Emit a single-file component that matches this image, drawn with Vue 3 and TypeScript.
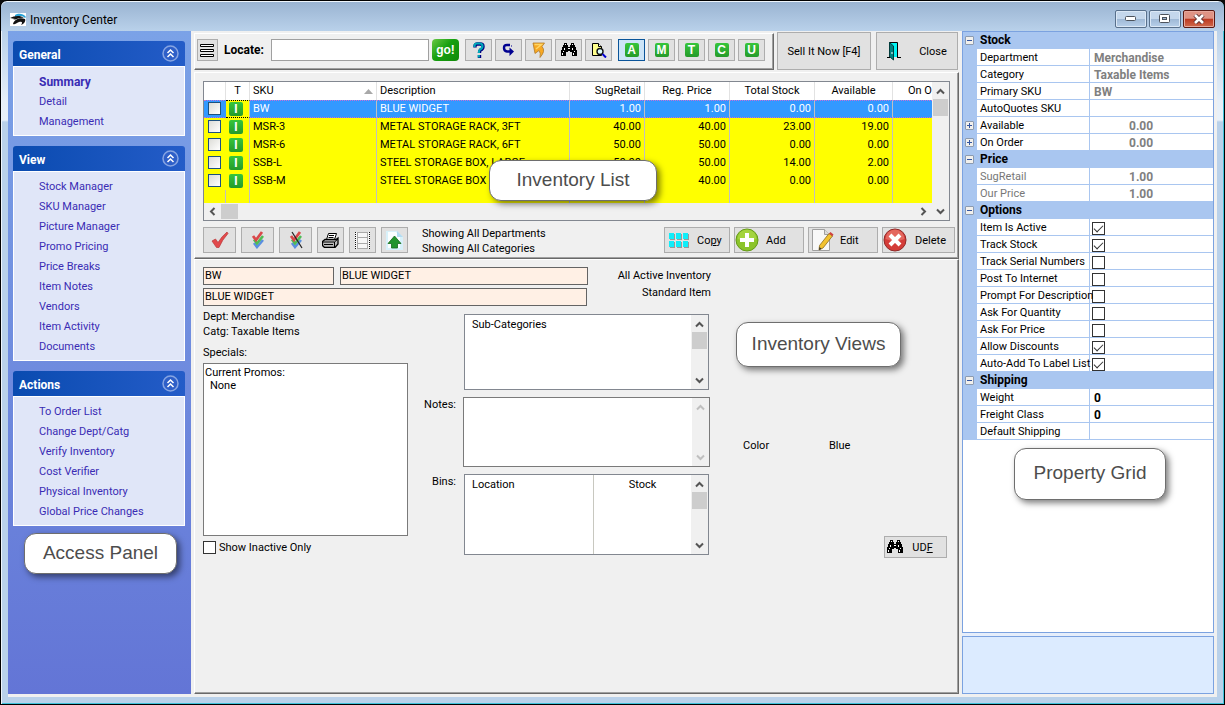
<script setup lang="ts">
import { ref } from 'vue'

interface NavGroup {
  title: string
  items: string[]
}
interface StockRow {
  sku: string
  description: string
  sugRetail: string
  regPrice: string
  totalStock: string
  available: string
}
interface Property {
  name: string
  value?: string
  checked?: boolean
  kind?: 'number' | 'option' | 'editable'
  expandable?: boolean
  muted?: boolean
}
interface PropertyGroup {
  title: string
  rows: Property[]
}

const navGroups: NavGroup[] = [
  { title: 'General', items: ['Summary', 'Detail', 'Management'] },
  {
    title: 'View',
    items: [
      'Stock Manager',
      'SKU Manager',
      'Picture Manager',
      'Promo Pricing',
      'Price Breaks',
      'Item Notes',
      'Vendors',
      'Item Activity',
      'Documents',
    ],
  },
  {
    title: 'Actions',
    items: [
      'To Order List',
      'Change Dept/Catg',
      'Verify Inventory',
      'Cost Verifier',
      'Physical Inventory',
      'Global Price Changes',
    ],
  },
]
const activeItem = ref('Summary')

const typeFilters = ['A', 'M', 'T', 'C', 'U']
const activeFilter = ref('A')

const rows: StockRow[] = [
  { sku: 'BW', description: 'BLUE WIDGET', sugRetail: '1.00', regPrice: '1.00', totalStock: '0.00', available: '0.00' },
  { sku: 'MSR-3', description: 'METAL STORAGE RACK, 3FT', sugRetail: '40.00', regPrice: '40.00', totalStock: '23.00', available: '19.00' },
  { sku: 'MSR-6', description: 'METAL STORAGE RACK, 6FT', sugRetail: '50.00', regPrice: '50.00', totalStock: '0.00', available: '0.00' },
  { sku: 'SSB-L', description: 'STEEL STORAGE BOX, LARGE', sugRetail: '50.00', regPrice: '50.00', totalStock: '14.00', available: '2.00' },
  { sku: 'SSB-M', description: 'STEEL STORAGE BOX', sugRetail: '', regPrice: '40.00', totalStock: '0.00', available: '0.00' },
]
const selectedSku = ref('BW')

const propertyGroups: PropertyGroup[] = [
  {
    title: 'Stock',
    rows: [
      { name: 'Department', value: 'Merchandise' },
      { name: 'Category', value: 'Taxable Items' },
      { name: 'Primary SKU', value: 'BW' },
      { name: 'AutoQuotes SKU' },
      { name: 'Available', value: '0.00', kind: 'number', expandable: true },
      { name: 'On Order', value: '0.00', kind: 'number', expandable: true },
    ],
  },
  {
    title: 'Price',
    rows: [
      { name: 'SugRetail', value: '1.00', kind: 'number', muted: true },
      { name: 'Our Price', value: '1.00', kind: 'number', muted: true },
    ],
  },
  {
    title: 'Options',
    rows: [
      { name: 'Item Is Active', kind: 'option', checked: true },
      { name: 'Track Stock', kind: 'option', checked: true },
      { name: 'Track Serial Numbers', kind: 'option', checked: false },
      { name: 'Post To Internet', kind: 'option', checked: false },
      { name: 'Prompt For Description', kind: 'option', checked: false },
      { name: 'Ask For Quantity', kind: 'option', checked: false },
      { name: 'Ask For Price', kind: 'option', checked: false },
      { name: 'Allow Discounts', kind: 'option', checked: true },
      { name: 'Auto-Add To Label List', kind: 'option', checked: true },
    ],
  },
  {
    title: 'Shipping',
    rows: [
      { name: 'Weight', value: '0', kind: 'editable' },
      { name: 'Freight Class', value: '0', kind: 'editable' },
      { name: 'Default Shipping' },
    ],
  },
]
</script>

<template>
  <div class="window">
    <svg class="symbols" aria-hidden="true">
      <symbol id="chev-up" viewBox="0 0 9 9"><path d="M1 6.5 4.500 3 8 6.500" fill="none" stroke="currentColor" stroke-width="2" /></symbol>
      <symbol id="chev-down" viewBox="0 0 9 9"><path d="M1 2.500 4.500 6 8 2.500" fill="none" stroke="currentColor" stroke-width="2" /></symbol>
      <symbol id="chev-left" viewBox="0 0 9 9"><path d="M6.500 1 3 4.500 6.500 8" fill="none" stroke="currentColor" stroke-width="2" /></symbol>
      <symbol id="chev-right" viewBox="0 0 9 9"><path d="M2.500 1 6 4.500 2.500 8" fill="none" stroke="currentColor" stroke-width="2" /></symbol>
      <symbol id="binoculars" viewBox="0 0 16 14">
        <path d="M3 0h3v2h1v2h2V2h1V0h3v2h1v2h1v3h1v6h-5V9H9V8H7v1H5v4H0V7h1V4h1V2h1z" fill="#000" />
        <path d="M4 1h1v1H4zM11 1h1v1h-1zM3 5h1v2H3zM2 8h1v1H2zM1 10h1v2H1zM12 5h-1v2h1zM13 8h1v1h-1zM12 10h1v2h-1zM7 5h2v1H7z" fill="#fff" />
      </symbol>
    </svg>

    <header class="title-bar">
      <svg class="app-icon" viewBox="0 0 16 13" aria-hidden="true">
        <rect width="16" height="13" fill="#fff" />
        <path d="M5 2C8 0 13 0 16 4L15 5C12 2 9 3 5 4Z" fill="#2aa3d6" />
        <path d="M0 5C4 3 10 2 14 5C9 4 7 7 3 7L5 6Z" fill="#111" />
        <path d="M3 11C4 7 9 4 15 6C16 8 14 11 11 12C13 9 12 8 9 9C6 10 5 12 3 11Z" fill="#111" />
      </svg>
      <h1>Inventory Center</h1>
      <div class="window-buttons">
        <button type="button" class="win-btn" aria-label="Minimize">
          <svg width="12" height="6" viewBox="0 0 12 6"><rect x=".5" y=".5" width="10" height="4" rx="1" fill="#fff" stroke="#4d535c" /></svg>
        </button>
        <button type="button" class="win-btn" aria-label="Restore">
          <svg width="12" height="10" viewBox="0 0 12 10"><rect x=".5" y=".5" width="10" height="8" rx="1" fill="#fff" stroke="#4d535c" /><rect x="3.500" y="3.500" width="4" height="2" fill="#9db6d2" stroke="#4d535c" /></svg>
        </button>
        <button type="button" class="win-btn close" aria-label="Close window">
          <svg width="12" height="10" viewBox="0 0 12 10"><path d="M2 1 10 9M10 1 2 9" stroke="#5a3030" stroke-width="4.400" /><path d="M2 1 10 9M10 1 2 9" stroke="#fff" stroke-width="2.600" /></svg>
        </button>
      </div>
    </header>

    <div class="body">
      <nav class="sidebar" aria-label="Access panel">
        <section v-for="group in navGroups" :key="group.title" class="nav-group">
          <header>
            <h2>{{ group.title }}</h2>
            <button type="button" class="collapse" :aria-label="'Collapse ' + group.title">
              <svg viewBox="0 0 17 17"><circle cx="8.500" cy="8.500" r="7.500" fill="#2e5fc8" stroke="#86a4e2" stroke-width="1.500" /><path d="M5.500 8 8.500 5 11.500 8M5.500 12 8.500 9 11.500 12" fill="none" stroke="#fff" stroke-width="1.500" /></svg>
            </button>
          </header>
          <ul>
            <li v-for="item in group.items" :key="item">
              <a href="#" :class="{ active: item === activeItem }" @click.prevent="activeItem = item">{{ item }}</a>
            </li>
          </ul>
        </section>
        <div class="callout access">Access Panel</div>
      </nav>

      <main class="main">
        <div class="top-row">
          <div class="panel toolbar">
            <button type="button" class="btn menu-btn" aria-label="Menu">
              <svg width="15" height="15" viewBox="0 0 15 15"><path d="M.5 1.500h13v2H.5zM.5 6.500h13v2H.5zM.5 11.500h13v2H.5z" fill="#fff" stroke="#000" /></svg>
            </button>
            <label class="locate" for="locate">Locate:</label>
            <input id="locate" class="locate-input" type="text" />
            <button type="button" class="go">go!</button>
            <div class="tools">
              <button type="button" class="btn tool" aria-label="Help">
                <svg width="14" height="17" viewBox="0 0 14 17"><path d="M3 5.500V4Q3 2 5.500 2H8Q11 2 11 4.500T8.500 8Q7.500 8.700 7.500 11M7.500 13v3" fill="none" stroke="#000080" stroke-width="3.400" /><path d="M2.500 5V4Q2.500 1.500 5 1.500H7.500Q10.500 1.500 10.500 4T8 7.500Q6.800 8.500 6.800 11M6.800 13v2.500" fill="none" stroke="#00a8b8" stroke-width="2.200" /></svg>
              </button>
              <button type="button" class="btn tool" aria-label="Undo">
                <svg width="14" height="14" viewBox="0 0 14 14"><path d="M8 2H5Q2 2 2 5T5 8.500H9" fill="none" stroke="#000090" stroke-width="2.400" /><path d="M7.500 4.500 12 8.500 7.500 13Z" fill="#000090" /><path d="M9 3h1" stroke="#000090" /></svg>
              </button>
              <button type="button" class="btn tool" aria-label="Jump">
                <svg width="14" height="16" viewBox="0 0 14 16"><path d="M1 1H12.500L10 4.500Q14 9 8 15.500Q9 11 7 8.500L3 11.500Z" fill="#f7a823" stroke="#b07a28" stroke-width=".8" /><path d="M2.500 2.500H9.500L4 7" fill="none" stroke="#ffd665" stroke-width="1.500" /></svg>
              </button>
              <button type="button" class="btn tool" aria-label="Find"><svg width="16" height="14"><use href="#binoculars" /></svg></button>
              <button type="button" class="btn tool" aria-label="Preview">
                <svg width="16" height="15" viewBox="0 0 16 15"><path d="M1.500.5h6l3 3v9h-9z" fill="#ffff8c" stroke="#000" /><path d="M7.500.5v3h3" fill="#fff" stroke="#000" /><circle cx="9" cy="8.500" r="3" fill="#dff" stroke="#111" stroke-width="1.400" /><path d="m11.500 11 3.500 3.500" stroke="#0000d0" stroke-width="2" /></svg>
              </button>
            </div>
            <div class="tools">
              <button
                v-for="type in typeFilters"
                :key="type"
                type="button"
                class="btn tool"
                :class="{ pressed: type === activeFilter }"
                @click="activeFilter = type"
              ><span class="chip">{{ type }}</span></button>
            </div>
          </div>
          <button type="button" class="btn sell">Sell It Now [F4]</button>
          <button type="button" class="btn close-btn">
            <svg width="14" height="19" viewBox="0 0 14 19" aria-hidden="true"><path d="M2.500 15V.5h8V15" fill="#00f4f4" stroke="#000" /><path d="M0 15.500h3M10 15.500h4" stroke="#000" /><path d="m2.500.5 4 3.500v14l-4-3.500z" fill="#007f7f" stroke="#003c3c" /><path d="M5 10v2" stroke="#fff" /></svg>
            <span>Close</span>
          </button>
        </div>

        <section class="panel list-panel">
          <div class="grid-box">
            <div class="grid-main">
              <table class="stock">
                <colgroup>
                  <col class="c-check" /><col class="c-type" /><col class="c-sku" /><col /><col class="c-sug" />
                  <col class="c-reg" /><col class="c-total" /><col class="c-avail" /><col class="c-order" />
                </colgroup>
                <thead>
                  <tr>
                    <th aria-label="Select"></th>
                    <th class="mid">T</th>
                    <th><span class="sorted">SKU<svg width="9" height="5" viewBox="0 0 9 5"><path d="M0 5 4.500 0 9 5z" fill="#a8a8a8" /></svg></span></th>
                    <th>Description</th>
                    <th class="num">SugRetail</th>
                    <th class="mid">Reg. Price</th>
                    <th class="mid">Total Stock</th>
                    <th class="mid">Available</th>
                    <th class="clip">On Order</th>
                  </tr>
                </thead>
                <tbody>
                  <tr v-for="row in rows" :key="row.sku" :class="{ selected: row.sku === selectedSku }" @click="selectedSku = row.sku">
                    <td class="tick"><input type="checkbox" class="row-check" :aria-label="'Select ' + row.sku" /></td>
                    <td class="type"><span class="chip small">I</span></td>
                    <td>{{ row.sku }}</td>
                    <td>{{ row.description }}</td>
                    <td class="num">{{ row.sugRetail }}</td>
                    <td class="num">{{ row.regPrice }}</td>
                    <td class="num">{{ row.totalStock }}</td>
                    <td class="num">{{ row.available }}</td>
                    <td></td>
                  </tr>
                  <tr class="filler"><td v-for="n in 9" :key="n"></td></tr>
                </tbody>
              </table>
              <div class="h-scroll">
                <svg width="9" height="9"><use href="#chev-left" /></svg>
                <span class="h-thumb"></span>
                <svg class="end" width="9" height="9"><use href="#chev-right" /></svg>
              </div>
            </div>
            <div class="v-scroll">
              <svg width="9" height="9"><use href="#chev-up" /></svg>
              <span class="v-thumb"></span>
              <svg class="end" width="9" height="9"><use href="#chev-down" /></svg>
            </div>
          </div>

          <div class="actions">
            <button type="button" class="btn wide-tool" aria-label="Mark">
              <svg width="18" height="18" viewBox="0 0 18 18"><path d="M1 10 4.500 8 7 11.500Q11 5 16 1L17 2.500Q11 9 8 16.500L5.500 16.500Z" fill="#e2494b" stroke="#b9393b" stroke-width=".7" /></svg>
            </button>
            <button type="button" class="btn wide-tool" aria-label="Mark all">
              <svg width="14" height="18" viewBox="0 0 14 18"><path d="m3 12 3 4 6-7" stroke="#5a8fe0" stroke-width="2.600" fill="none" /><path d="m3 8.500 3 4L12 5" stroke="#4fbb55" stroke-width="2.600" fill="none" /><path d="m2 5 3 4L11 1" stroke="#d9484a" stroke-width="2.800" fill="none" /></svg>
            </button>
            <button type="button" class="btn wide-tool" aria-label="Unmark all">
              <svg width="14" height="18" viewBox="0 0 14 18"><path d="m3 12 3 4 6-7" stroke="#5a8fe0" stroke-width="2.600" fill="none" /><path d="m3 8.500 3 4L12 5" stroke="#4fbb55" stroke-width="2.600" fill="none" /><path d="m2 5 3 4L11 1" stroke="#d9484a" stroke-width="2.800" fill="none" /><path d="m3 1 10 16" stroke="#222" stroke-width="1.200" /></svg>
            </button>
            <button type="button" class="btn tool tall" aria-label="Print">
              <svg width="17" height="15" viewBox="0 0 17 15"><path d="M4.500 6.500 6.500.5h8l-2 6" fill="#fff" stroke="#000" /><path d="M7 2.500h5M6.500 4.500h5" stroke="#000" /><path d="M.5 8.500 3 6.500h11l2-1.500v6l-3 3.500H2.500l-2-2z" fill="#bdbdbd" stroke="#000" stroke-width="1.300" /><path d="M1 9h11.500v5M12.500 9 16 6M2 11.500h9" stroke="#000" fill="none" /></svg>
            </button>
            <button type="button" class="btn tool tall" aria-label="Film strip">
              <svg width="15" height="17" viewBox="0 0 15 17"><rect width="15" height="17" fill="#f6f6f6" /><path d="M.5 0v17M14.500 0v17" stroke="#111" stroke-dasharray="1 1" /><path d="M2.500 0v17M12.500 0v17M3 .5h9M3 5.500h9M3 11.500h9M3 16.500h9" stroke="#a9a9a9" /></svg>
            </button>
            <button type="button" class="btn tool tall" aria-label="Upload">
              <svg width="17" height="19" viewBox="0 0 17 19"><path d="M0 0h11l6 6v13H0z" fill="#d8f1fa" /><path d="M2 1h8l4 4v12H2z" fill="#fbfeff" /><path d="m11 0 6 6h-6z" fill="#b4dcf2" /><path d="M8.500 5 15 12.500h-3.500V17h-6v-4.500H2z" fill="#22942c" stroke="#146b1b" stroke-width=".8" /></svg>
            </button>
            <p class="showing">Showing All Departments<br />Showing All Categories</p>
            <div class="commands">
              <button type="button" class="btn cmd copy">
                <svg width="20" height="15" viewBox="0 0 20 15" aria-hidden="true"><path d="M1 1h5v6H1zM8 1h5v6H8zM15 1h5v6h-5zM1 9h5v6H1zM8 9h5v6H8zM15 9h5v6h-5z" fill="#999" /><path d="M0 0h5v6H0zM7 0h5v6H7zM14 0h5v6h-5zM0 8h5v6H0zM7 8h5v6H7zM14 8h5v6h-5z" fill="#10eefa" /></svg>
                <span>Co<u>p</u>y</span>
              </button>
              <button type="button" class="btn cmd add">
                <svg width="24" height="24" viewBox="0 0 24 24" aria-hidden="true"><circle cx="12" cy="12" r="11" fill="#8cc42a" stroke="#659a18" /><path d="M2.500 11a9.500 9.500 0 0 1 19 0q-9 4-19 0" fill="#b4e04c" opacity=".6" /><path d="M10 5h4v5h5v4h-5v5h-4v-5H5v-4h5z" fill="#fff" /></svg>
                <span>Add</span>
              </button>
              <button type="button" class="btn cmd edit">
                <svg width="23" height="24" viewBox="0 0 23 24" aria-hidden="true"><path d="M1.500 1.500h12l5 5v16h-17z" fill="#f8f8f8" stroke="#a0a0a0" /><path d="M13.500 1.500v5h5" fill="#ddd" stroke="#a0a0a0" /><path d="M18 5.500 21.500 8 12 20 8 22 8.500 17.500z" fill="#f2c230" stroke="#8d6c1d" stroke-width=".8" /><path d="m18 5.500 1.500-1.500 3 2.500-1 1.800z" fill="#cf4141" /><path d="m8 22 .4-3 2.200 1.800z" fill="#333" /></svg>
                <span>Edit</span>
              </button>
              <button type="button" class="btn cmd delete">
                <svg width="24" height="24" viewBox="0 0 24 24" aria-hidden="true"><circle cx="12" cy="12" r="11" fill="#d43c38" stroke="#8f2a28" /><path d="M2.500 11a9.500 9.500 0 0 1 19 0q-9 4-19 0" fill="#ee8378" opacity=".6" /><path d="m7 7 10 10M17 7 7 17" stroke="#fff" stroke-width="4" /></svg>
                <span>Delete</span>
              </button>
            </div>
          </div>
          <div class="callout list">Inventory List</div>
        </section>

        <section class="panel detail">
          <div class="ident">
            <div class="fields">
              <input class="field f-sku" type="text" value="BW" aria-label="SKU" />
              <input class="field f-desc" type="text" value="BLUE WIDGET" aria-label="Description" />
              <input class="field f-long" type="text" value="BLUE WIDGET" aria-label="Long description" />
            </div>
            <p class="kind">All Active Inventory<br />Standard Item</p>
          </div>

          <div class="detail-row">
            <div class="specials">
              <p>Dept: Merchandise<br />Catg: Taxable Items</p>
              <p class="caption">Specials:</p>
              <div class="promos">Current Promos:<br /><span class="indent">None</span></div>
              <label class="inactive"><input type="checkbox" class="check" />Show Inactive Only</label>
            </div>

            <div class="lists">
              <span></span>
              <div class="box sub">
                <div class="box-main">Sub-Categories</div>
                <div class="v-scroll">
                  <svg width="9" height="9"><use href="#chev-up" /></svg>
                  <span class="v-thumb"></span>
                  <svg class="end" width="9" height="9"><use href="#chev-down" /></svg>
                </div>
              </div>
              <label for="notes">Notes:</label>
              <div class="box notes">
                <textarea id="notes"></textarea>
                <div class="v-scroll disabled">
                  <svg width="9" height="9"><use href="#chev-up" /></svg>
                  <svg class="end" width="9" height="9"><use href="#chev-down" /></svg>
                </div>
              </div>
              <span class="bins-label">Bins:</span>
              <div class="box bins">
                <div class="bin-col">Location</div>
                <div class="bin-col stock-col">Stock</div>
                <div class="v-scroll">
                  <svg width="9" height="9"><use href="#chev-up" /></svg>
                  <span class="v-thumb"></span>
                  <svg class="end" width="9" height="9"><use href="#chev-down" /></svg>
                </div>
              </div>
            </div>

            <div class="attributes">
              <dl><dt>Color</dt><dd>Blue</dd></dl>
              <button type="button" class="btn udf"><svg width="16" height="14" aria-hidden="true"><use href="#binoculars" /></svg><span>UD<u>F</u></span></button>
            </div>
          </div>
          <div class="callout views">Inventory Views</div>
        </section>
      </main>

      <aside class="properties" aria-label="Property grid">
        <div class="prop-box">
          <table class="props">
            <colgroup><col class="p-gutter" /><col class="p-name" /><col /></colgroup>
            <tbody v-for="group in propertyGroups" :key="group.title">
              <tr class="group">
                <td class="gutter"><button type="button" class="expander" :aria-label="'Collapse ' + group.title"></button></td>
                <th colspan="2" scope="rowgroup">{{ group.title }}</th>
              </tr>
              <tr v-for="prop in group.rows" :key="prop.name">
                <td class="gutter"><button v-if="prop.expandable" type="button" class="expander plus" :aria-label="'Expand ' + prop.name"></button></td>
                <th scope="row" class="name" :class="{ muted: prop.muted }">{{ prop.name }}</th>
                <td class="value" :class="prop.kind">
                  <input v-if="prop.kind === 'option'" type="checkbox" class="check" :checked="prop.checked" :aria-label="prop.name" />
                  <template v-else>{{ prop.value }}</template>
                </td>
              </tr>
            </tbody>
          </table>
          <div class="callout grid">Property Grid</div>
        </div>
        <div class="hint-box"></div>
      </aside>
    </div>
  </div>
</template>

<style>
body {
  margin: 0;
  background: #0b0b0b;
}
</style>

<style scoped>
.window {
  box-sizing: border-box;
  display: flex;
  flex-direction: column;
  min-height: 100vh;
  padding: 1px 7px 7px;
  border: 1px solid #000;
  border-radius: 7px 7px 0 0;
  box-shadow: inset 1px 1px #eef5fc, inset -1px -1px #3fc2da;
  background: linear-gradient(#9ab4d2, #b9d1ea 30px, #e6eff8 100px, #e9f1f9 119px, #b9d1ea 121px);
  color: #000;
  font: 11px/15px Roboto, "Liberation Sans", sans-serif;
}
.window *,
.window *::before {
  box-sizing: border-box;
}
.symbols {
  position: absolute;
  width: 0;
  height: 0;
}
h1, h2, p, ul, dl, dd {
  margin: 0;
  padding: 0;
  font: inherit;
}
button, input, textarea {
  margin: 0;
  color: inherit;
  font: inherit;
}
svg {
  display: block;
  flex: none;
}

/* Title bar */
.title-bar {
  display: flex;
  align-items: center;
  height: 29px;
  margin: 0 -7px;
  padding: 5px 2px 0 9px;
  background: linear-gradient(#9ab4d2, #b9d1ea);
  border-radius: 6px 6px 0 0;
}
.app-icon {
  width: 16px;
  height: 13px;
  margin-right: 4px;
}
h1 {
  padding-top: 1px;
  font: 12px/16px Roboto, "Open Sans", sans-serif;
}
.window-buttons {
  display: flex;
  gap: 2px;
  margin-left: auto;
  padding-right: 7px;
}
.win-btn {
  display: flex;
  align-items: center;
  justify-content: center;
  width: 32px;
  height: 18px;
  padding: 0;
  border: 1px solid #58708c;
  border-radius: 2px;
  box-shadow: inset 0 0 0 1px #dbe8f6;
  background: linear-gradient(#c4d7ec 48%, #9fb9d6 52%, #b8d0ea);
}
.win-btn.close {
  border-color: #5a1a14;
  box-shadow: inset 0 0 0 1px #e6a89c;
  background: linear-gradient(#df9384 45%, #bd3a22 52%, #cf6a4c);
}

.body {
  display: flex;
  flex: 1;
  gap: 3px;
  padding: 0 3px 3px 0;
  background: #f0f0f0;
}

/* Access panel */
.sidebar {
  position: relative;
  display: flex;
  flex: none;
  flex-direction: column;
  gap: 10px;
  width: 183px;
  padding: 10px 6px 10px 5px;
  background: linear-gradient(#7ba2e7, #6375d6);
}
.nav-group header {
  display: flex;
  align-items: center;
  justify-content: space-between;
  height: 25px;
  padding: 0 6px;
  border-radius: 3px 3px 0 0;
  background: linear-gradient(90deg, #0a4bb0, #245cc8);
  color: #fff;
}
.nav-group h2 {
  padding-top: 3px;
  font: bold 12px/16px Roboto, "Open Sans", sans-serif;
}
.collapse {
  width: 17px;
  height: 17px;
  padding: 0;
  border: 0;
  background: none;
}
.nav-group ul {
  padding: 5px 25px 3px;
  border: 1px solid #fff;
  background: #e0e6f8;
  list-style: none;
}
.nav-group li {
  height: 20px;
  line-height: 20px;
  white-space: nowrap;
}
.nav-group a {
  color: #3a2cb4;
  text-decoration: none;
}
.nav-group a.active {
  font-weight: bold;
  font-size: 12px;
}

/* Shared pieces */
.panel {
  border: 1px solid #fff;
  border-right-color: #696969;
  border-bottom-color: #696969;
  box-shadow: inset -1px -1px #a0a0a0;
}
.btn {
  display: flex;
  flex: none;
  align-items: center;
  justify-content: center;
  padding: 0;
  border: 1px solid #adadad;
  background: #e1e1e1;
  white-space: nowrap;
}
.chip {
  width: 14px;
  height: 14px;
  border-radius: 2px;
  background: linear-gradient(#36c63a, #259a2a);
  color: #fff;
  font: bold 12px/14px "Liberation Sans", sans-serif;
  text-align: center;
}
.callout {
  position: absolute;
  display: flex;
  align-items: center;
  justify-content: center;
  padding-bottom: 2px;
  border: 1px solid #6e6e6e;
  border-radius: 12px;
  box-shadow: 3px 3px 6px rgba(0, 0, 0, 0.5);
  background: #fff;
  color: #4d4d4d;
  font: 19px/24px "Liberation Sans", Arial, sans-serif;
  white-space: nowrap;
}
.access {
  top: 502px;
  left: 16px;
  width: 153px;
  height: 41px;
}
.check,
.row-check {
  display: block;
  flex: none;
  width: 13px;
  height: 13px;
  border: 1px solid #333;
  background: #fff;
  appearance: none;
}
.check:checked::before {
  display: block;
  width: 9px;
  height: 5px;
  margin: 2px 1px;
  border: solid #333;
  border-width: 0 0 1px 1px;
  content: "";
  transform: rotate(-45deg);
}
.v-scroll {
  display: flex;
  flex: none;
  flex-direction: column;
  align-items: center;
  width: 17px;
  padding: 5px 0 4px;
  background: #f0f0f0;
  color: #555;
}
.v-scroll.disabled {
  color: #bfbfbf;
}
.v-thumb {
  width: 15px;
  height: 17px;
  margin-top: 3px;
  background: #cdcdcd;
}
.v-scroll .end {
  margin-top: auto;
}

/* Toolbar */
.main {
  display: flex;
  flex: 1;
  flex-direction: column;
  min-width: 0;
  padding-top: 1px;
}
.top-row {
  display: flex;
  height: 38px;
}
.toolbar {
  display: flex;
  flex: 1;
  min-width: 0;
  margin-top: 1px;
  padding: 5px 0 0 2px;
}
.menu-btn {
  width: 21px;
  height: 22px;
}
.locate {
  width: 53px;
  padding-left: 6px;
  font-weight: bold;
  font-size: 12px;
  line-height: 22px;
}
.locate-input {
  width: 158px;
  height: 22px;
  border: 1px solid #a0a0a0;
  background: #fff;
}
.go {
  width: 27px;
  height: 22px;
  margin: 0 6px 0 3px;
  padding: 0;
  border: 0;
  border-radius: 4px;
  background: linear-gradient(135deg, #69c845, #17a010 45%, #128a0a);
  color: #fff;
  font: bold 12px/20px "Liberation Sans", sans-serif;
}
.tools {
  display: flex;
  gap: 3px;
  margin-right: 6px;
}
.tool {
  width: 27px;
  height: 22px;
}
.tool.pressed {
  border-color: #0a5499;
  background: #cce4f7;
}
.sell {
  width: 94px;
  margin-left: 3px;
}
.close-btn {
  width: 82px;
  margin: 0 1px 0 5px;
  gap: 18px;
}

/* Inventory list */
.list-panel {
  position: relative;
  margin-top: 2px;
  padding: 8px 8px 5px;
}
.grid-box {
  display: flex;
  border: 1px solid #828790;
}
.grid-main {
  flex: 1;
  min-width: 0;
}
.stock {
  width: 100%;
  border-spacing: 0;
  table-layout: fixed;
  background: #ff0;
}
.c-check { width: 22px; }
.c-type { width: 24px; }
.c-sku { width: 127px; }
.c-sug { width: 75px; }
.c-reg, .c-total { width: 85px; }
.c-avail { width: 78px; }
.c-order { width: 39px; }
.stock th,
.stock td {
  height: 18px;
  padding: 0 3px;
  overflow: hidden;
  border-right: 1px solid #c0c0c0;
  font-weight: normal;
  line-height: 16px;
  text-align: left;
  white-space: nowrap;
}
.stock th {
  border-right-color: #e2e2e2;
  background: #fff;
}
.stock th:last-child,
.stock td:last-child {
  border-right: 0;
}
.stock .mid {
  text-align: center;
}
.stock .num {
  text-align: right;
}
.stock .clip {
  padding: 0 0 0 15px;
}
.sorted {
  display: flex;
  align-items: center;
  justify-content: space-between;
}
.stock .tick,
.stock .type {
  padding: 2px 0 0;
  vertical-align: top;
}
.stock .tick {
  border-right-color: transparent;
}
.stock .selected .tick,
.stock .selected .type {
  padding-top: 1px;
}
.row-check {
  margin-left: 4px;
  border-color: #1c5180;
  background: linear-gradient(135deg, #dcdcd7, #fff);
}
.chip.small {
  display: block;
  margin-left: 3px;
}
.selected td {
  border-top: 1px dotted #c76fd6;
  border-bottom: 1px dotted #c76fd6;
  background: #39f;
  color: #fff;
}
.selected .type {
  border-top-color: #000;
  border-bottom-color: #000;
  background: #ff0;
}
.stock .filler td {
  height: 13px;
  line-height: 13px;
}
.h-scroll {
  display: flex;
  align-items: center;
  height: 17px;
  padding: 0 4px;
  background: #f0f0f0;
  color: #555;
}
.h-thumb {
  width: 17px;
  height: 15px;
  margin-left: 4px;
  background: #cdcdcd;
}
.h-scroll .end {
  margin-left: auto;
}
.list {
  top: 87px;
  left: 294px;
  width: 168px;
  height: 41px;
}

/* Action buttons */
.actions {
  display: flex;
  gap: 5px;
  height: 26px;
  margin: 6px -5px 0 0;
}
.wide-tool {
  width: 33px;
}
.tool.tall {
  height: 26px;
}
.showing {
  flex: 1;
  margin: -1px 0 0 9px;
}
.commands {
  display: flex;
  gap: 4px;
}
.cmd {
  justify-content: flex-start;
  width: 70px;
}
.copy {
  width: 66px;
  padding-left: 4px;
  gap: 8px;
}
.add {
  gap: 7px;
}
.edit {
  padding-left: 2px;
  gap: 6px;
}
.delete {
  width: 73px;
  gap: 8px;
}

/* Item detail */
.detail {
  position: relative;
  flex: 1;
  padding: 7px 8px 8px;
}
.ident {
  display: flex;
}
.fields {
  display: flex;
  flex-wrap: wrap;
  gap: 3px 6px;
  width: 385px;
}
.field {
  height: 18px;
  padding: 0 0 2px 1px;
  border: 1px solid #646464;
  background: #fff0e5;
}
.f-sku { width: 131px; }
.f-desc { width: 248px; }
.f-long { width: 384px; }
.kind {
  width: 123px;
  line-height: 17px;
  text-align: right;
}
.detail-row {
  display: flex;
}
.specials {
  width: 205px;
  padding-top: 3px;
}
.caption {
  padding: 6px 0 3px;
}
.promos {
  height: 173px;
  padding: 2px 1px;
  border: 1px solid #7a7a7a;
  background: #fff;
  line-height: 13px;
}
.indent {
  padding-left: 5px;
}
.inactive {
  display: flex;
  align-items: center;
  gap: 3px;
  margin-top: 4px;
}
.lists {
  display: grid;
  grid-template-columns: 55px 247px;
  row-gap: 7px;
  align-content: start;
  align-items: start;
  width: 302px;
  padding-top: 8px;
  text-align: right;
}
.lists label,
.bins-label {
  padding-right: 7px;
}
.box {
  display: flex;
  margin: 0 1px;
  border: 1px solid #828790;
  background: #fff;
  text-align: left;
}
.sub { height: 76px; }
.notes {
  height: 70px;
  margin: 0;
  border-color: #7a7a7a;
}
.bins { height: 81px; }
.box-main {
  flex: 1;
  padding: 2px 7px;
}
.notes textarea {
  flex: 1;
  min-width: 0;
  padding: 2px;
  border: 0;
  background: none;
  resize: none;
}
.bin-col {
  width: 129px;
  padding: 2px 7px;
  border-right: 1px solid #c8c8c0;
}
.bin-col.stock-col {
  flex: 1;
  border-right: 0;
  text-align: center;
}
.attributes {
  display: flex;
  flex: 1;
  flex-direction: column;
  align-items: flex-end;
  padding-top: 132px;
}
.attributes dl {
  display: flex;
  width: 207px;
}
.attributes dt {
  width: 86px;
}
.udf {
  gap: 9px;
  width: 63px;
  height: 22px;
  margin: 83px 3px 0 0;
  padding-right: 11px;
}
.views {
  top: 62px;
  left: 541px;
  width: 165px;
  height: 45px;
}

/* Property grid */
.properties {
  display: flex;
  flex: none;
  flex-direction: column;
  gap: 3px;
  width: 252px;
  background: #e6eefb;
}
.prop-box {
  position: relative;
  flex: 1;
  border: 1px solid #7ba2e0;
  background: #fff;
}
.hint-box {
  height: 58px;
  border: 1px solid #7ba2e0;
  background: #dcebff;
}
.props {
  width: 100%;
  border-spacing: 0;
  table-layout: fixed;
}
.p-gutter { width: 14px; }
.p-name { width: 113px; }
.props th,
.props td {
  height: 17px;
  padding: 2px 0 0 3px;
  border-bottom: 1px solid #a9c6f0;
  line-height: 14px;
  text-align: left;
  white-space: nowrap;
}
.props .gutter {
  padding: 0 0 0 2px;
  background: #a9c6f0;
}
.props .group th {
  padding-top: 0;
  background: #a9c6f0;
  font-weight: bold;
  font-size: 12px;
}
.props .name {
  border-right: 1px solid #a9c6f0;
  font-weight: normal;
}
.props .muted {
  color: #777;
}
.props .value {
  padding-left: 4px;
  color: #808080;
  font-weight: bold;
  font-size: 12px;
}
.props .number {
  padding-left: 39px;
}
.props .option {
  padding-left: 2px;
}
.props .editable {
  color: #000;
}
.expander {
  display: block;
  width: 9px;
  height: 9px;
  padding: 0;
  border: 1px solid #8c9bb0;
  border-radius: 1px;
  background: linear-gradient(#3355a0, #3355a0) center / 5px 1px no-repeat, #f2f0ec;
}
.expander.plus {
  background: linear-gradient(#3355a0, #3355a0) center / 5px 1px no-repeat, linear-gradient(#3355a0, #3355a0) center / 1px 5px no-repeat, #f2f0ec;
}
.grid {
  top: 416px;
  left: 51px;
  width: 152px;
  height: 52px;
}
</style>
